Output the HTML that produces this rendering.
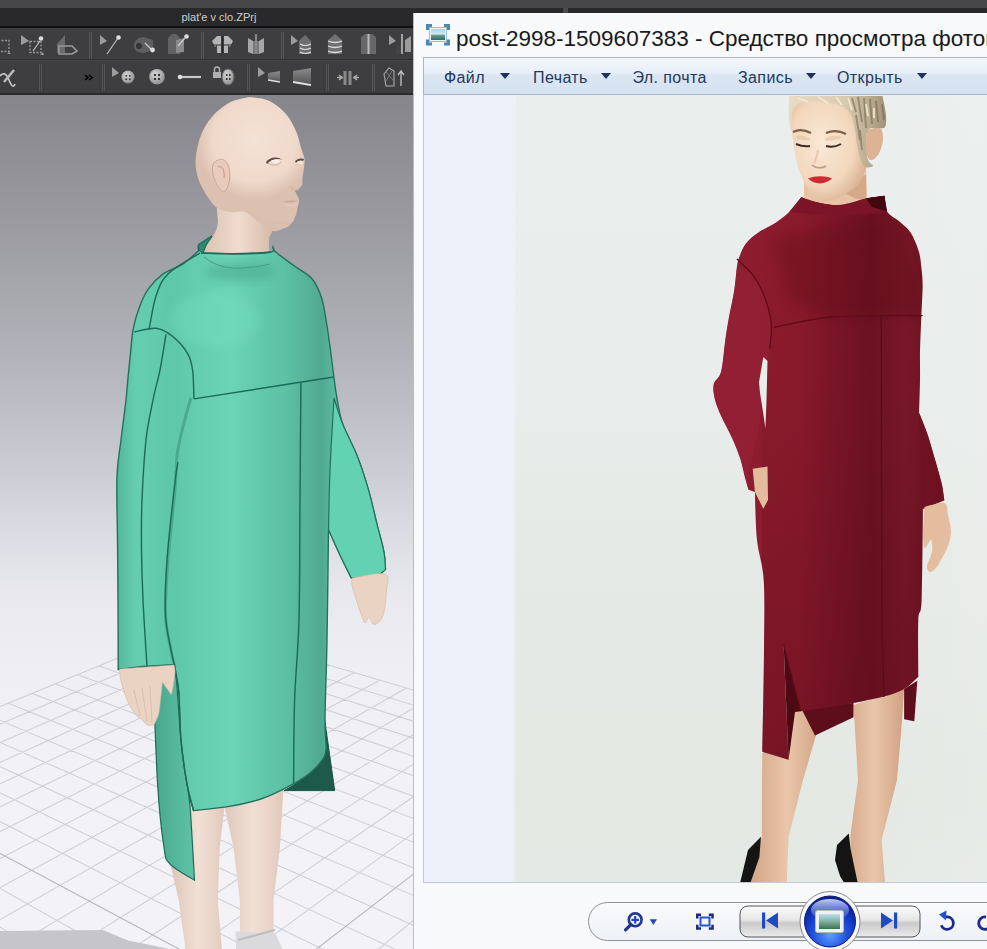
<!DOCTYPE html>
<html><head><meta charset="utf-8">
<style>
*{margin:0;padding:0;box-sizing:border-box}
html,body{width:987px;height:949px;overflow:hidden;background:#474749;font-family:"Liberation Sans",sans-serif}
.abs{position:absolute}
#clo{left:0;top:0;width:413px;height:949px;overflow:hidden}
#topgray{left:0;top:0;width:987px;height:8px;background:#474749}
#titlebar{left:0;top:8px;width:987px;height:18px;background:#29292b}
#blackline{left:0;top:26px;width:413px;height:2px;background:#111}
#row1{left:0;top:28px;width:413px;height:32px;background:#3e3e40;border-bottom:1px solid #2e2e30}
#row2{left:0;top:61px;width:413px;height:32px;background:#3e3e40}
#row2b{left:0;top:93px;width:413px;height:2px;background:#2a2a2c}
#cloTitle{left:181.5px;top:11px;font-size:11px;line-height:13px;color:#cfcfcf;white-space:nowrap}
#viewport{left:0;top:95px;width:413px;height:854px;background:linear-gradient(#85858b 0px,#99999f 120px,#b2b2ba 260px,#c8c8d1 360px,#dcdce4 440px,#e8e8ee 500px,#eeeef3 570px,#f2f2f6 680px,#f3f3f7 854px)}
#win{left:413px;top:13px;width:574px;height:936px;background:#f8f9fa;border-left:1px solid #b9bcc2}
#wtitle{left:456px;top:25.5px;font-size:22.5px;line-height:26px;color:#1a1a1a;white-space:nowrap}
#menubar{left:423px;top:57px;width:564px;height:38px;border:1px solid #a9b7c9;border-right:none;background:linear-gradient(#f3f7fc 0px,#e9f0f9 14px,#dbe6f3 17px,#d6e2f1 35px)}
.mi{position:absolute;top:69px;font-size:16px;line-height:18px;letter-spacing:0.4px;color:#24395e;white-space:nowrap}
.tri{position:absolute;top:73px;width:0;height:0;border-left:5.5px solid transparent;border-right:5.5px solid transparent;border-top:6px solid #1e3160}
#content{left:423px;top:95px;width:564px;height:788px;background:#ecf1f9;border-left:1px solid #c3c9d2;border-bottom:1px solid #c3c9d2}
#photo{left:513px;top:95px;width:474px;height:787px;background:linear-gradient(90deg,rgba(255,255,255,0.35) 0px,rgba(255,255,255,0) 4px,rgba(255,255,255,0) 60%,rgba(255,255,255,0.12) 100%),linear-gradient(#eaeeec 0px,#e8ecea 300px,#e5e9e5 560px,#e3e8e3 700px,#e5e9e5 787px)}
</style></head><body>
<div id="topgray" class="abs"></div>
<div id="titlebar" class="abs"></div>
<div id="clo" class="abs">
  <div id="blackline" class="abs"></div>
  <div id="row1" class="abs"></div>
  <div id="row2" class="abs"></div>
  <div id="row2b" class="abs"></div>
  <svg class="abs" style="left:0;top:28px" width="413" height="67" viewBox="0 28 413 67">
<defs>
<linearGradient id="ig" x1="0" y1="0" x2="0" y2="1"><stop offset="0" stop-color="#8a8a8a"/><stop offset="1" stop-color="#5a5a5a"/></linearGradient>
<radialGradient id="bt" cx="0.4" cy="0.35" r="0.7"><stop offset="0" stop-color="#d8d8d8"/><stop offset="1" stop-color="#8a8a8a"/></radialGradient>
</defs>
<g stroke="#555557" stroke-width="1"><path d="M89.5 32V59M91.5 32V59M201.5 32V59M203.5 32V59M281.5 32V59M283.5 32V59M39.5 64V91M41.5 64V91M102.5 64V91M104.5 64V91M247.5 64V91M249.5 64V91M326.5 64V91M328.5 64V91M372.5 64V91M374.5 64V91"/></g>
<g fill="none" stroke="#9a9a9a" stroke-width="1.3" stroke-dasharray="2 1.5">
<rect x="-2" y="40.5" width="11" height="11"/><rect x="30" y="41.5" width="11" height="11"/></g>
<path d="M9 52l2 2h-4z M43 52l1 3h-4z" fill="#999"/>
<path d="M21 35l8 6l-8 4z" fill="#9c9c9c"/><path d="M33 51l7-10" stroke="#bbb" stroke-width="1.3"/><circle cx="41" cy="38.5" r="2.3" fill="#ddd"/>
<path d="M57 44l8-9v18h-8z" fill="#6a6a6a"/><path d="M59 46h13l5 5l-5 3h-13z" fill="none" stroke="#9a9a9a" stroke-width="1.5"/>
<path d="M100 35l7 6l-7 4z" fill="#9c9c9c"/><path d="M107 54l11-16" stroke="#bbb" stroke-width="1.2"/><circle cx="118.5" cy="37.5" r="2.3" fill="#ddd"/>
<path d="M134 46c0-6 5-9 10-9l9 3v10l-9 3c-6 0-10-2-10-7z" fill="#5e5e60"/><circle cx="139" cy="46" r="3" fill="#333"/><path d="M145 43l6 6" stroke="#ccc" stroke-width="1.3"/><circle cx="152.5" cy="50" r="2.4" fill="#ddd"/>
<path d="M168 38l4-4h4l4 4v16h-12z" fill="#626264"/><path d="M176 40l8-2v14l-8 1z" fill="#8a8a8a"/><circle cx="186.5" cy="36.5" r="2.3" fill="#ddd"/><path d="M178 46l7-8" stroke="#ccc" stroke-width="1.2"/>
<path d="M212 41l5-5h4v17h-4v-8l-2 2zM233 41l-5-5h-4v17h4v-8l2 2z" fill="#b4b4b4"/><path d="M222 36h1v17h-1z" fill="#222"/><path d="M212 45h21" stroke="#333" stroke-width="1"/>
<path d="M248 38l5 3v13l-5-2zM264 38l-5 3v13l5-2z" fill="#a8a8a8"/><path d="M253 41h6v13h-6z" fill="#777"/><path d="M256 34v20" stroke="#888" stroke-width="2"/>
<path d="M291 35l7 6l-7 4z" fill="#9c9c9c"/><path d="M299 41l6-6l6 6v13h-12z" fill="#6e6e70"/><path d="M300 44q5 3 11 0M300 48q5 3 11 0M300 52q5 3 11 0" stroke="#ddd" stroke-width="1.2" fill="none"/>
<path d="M328 40l7-6l7 6v14h-14z" fill="#707072"/><path d="M328 41q7 3 14 0M328 46q7 3 14 0M328 51q7 3 14 0" stroke="#ddd" stroke-width="1.3" fill="none"/>
<path d="M361 37l4-3h7l4 3v17h-15z" fill="#68686a"/><path d="M368.5 34v20" stroke="#bbb" stroke-width="2"/>
<path d="M389 35l7 6l-7 4z" fill="#9c9c9c"/><path d="M402 34v20" stroke="#bbb" stroke-width="1.6"/><path d="M405 40l6-4v16h-6z" fill="#9a9a9a"/><path d="M396 45l5-1v10h-5z" fill="#444"/>
<path d="M0 76q5 -6 9 4t6 4" stroke="#cfcfcf" stroke-width="1.5" fill="none"/><path d="M4 82l10-12" stroke="#bbb" stroke-width="2.5"/>
<path d="M85 75l3 2.5l-3 2.5M89 75l3 2.5l-3 2.5" stroke="#000" stroke-width="1.6" fill="none"/>
<path d="M112 67l7 6l-7 4z" fill="#9c9c9c"/><circle cx="128" cy="77" r="6.5" fill="url(#bt)"/><path d="M125.5 75h1.6v1.6h-1.6zM129 75h1.6v1.6h-1.6zM125.5 78.4h1.6v1.6h-1.6zM129 78.4h1.6v1.6h-1.6z" fill="#333"/>
<circle cx="157" cy="76.8" r="7.8" fill="url(#bt)"/><path d="M154 74h2v2h-2zM158 74h2v2h-2zM154 78h2v2h-2zM158 78h2v2h-2z" fill="#333"/>
<path d="M180 77h21" stroke="#c8c8c8" stroke-width="2.2"/><circle cx="180" cy="77" r="2.3" fill="#ddd"/>
<path d="M213 72h8v6h-8z" fill="#b0b0b0"/><path d="M214.5 72v-2.5a2.5 2.5 0 0 1 5 0v2.5" stroke="#b0b0b0" stroke-width="1.4" fill="none"/>
<ellipse cx="228" cy="77" rx="6" ry="8" fill="url(#bt)" stroke="#666"/><path d="M226 74h1.5v2h-1.5zM229 74h1.5v2h-1.5zM226 78h1.5v2h-1.5zM229 78h1.5v2h-1.5z" fill="#333"/>
<path d="M258 67l7 6l-7 4z" fill="#9c9c9c"/><path d="M268 73l12-2v10l-12-1z" fill="url(#ig)"/><path d="M268 80l12 2" stroke="#ddd" stroke-width="1.6"/>
<path d="M293 71l18-3v15l-18-1z" fill="url(#ig)"/><path d="M293 82l18 3" stroke="#e0e0e0" stroke-width="1.8"/>
<path d="M345 71v14M350 71v14" stroke="#8a8a8a" stroke-width="3"/><path d="M337 77.5h6M339 75l3 2.5l-3 2.5M359 77.5h-6M357 75l-3 2.5l3 2.5" stroke="#aaa" stroke-width="1.6" fill="none"/>
<path d="M384 74l5-6l5 3v15h-8z" fill="none" stroke="#aaa" stroke-width="1.1"/><path d="M386 72l7 8M392 71l-6 10" stroke="#888" stroke-width="0.8"/><path d="M401 86v-14M398 75l3-4l3 4" stroke="#bbb" stroke-width="1.4" fill="none"/>
</svg>
  <div id="cloTitle" class="abs">plat'e v clo.ZPrj</div>
  <div id="viewport" class="abs"></div>
<svg class="abs" style="left:0;top:0" width="413" height="949" viewBox="0 0 413 949">
<defs>
<linearGradient id="leg" x1="0" x2="1"><stop offset="0" stop-color="#dcc5b8"/><stop offset="0.5" stop-color="#f2e0d5"/><stop offset="1" stop-color="#e0c8ba"/></linearGradient>
<linearGradient id="body" x1="118" x2="386" y1="0" y2="0" gradientUnits="userSpaceOnUse">
 <stop offset="0" stop-color="#55b99c"/><stop offset="0.07" stop-color="#65ceb1"/><stop offset="0.2" stop-color="#5fc7a9"/><stop offset="0.42" stop-color="#6bd4b7"/><stop offset="0.62" stop-color="#5dc1a4"/><stop offset="0.76" stop-color="#50a991"/><stop offset="0.84" stop-color="#60c7aa"/><stop offset="1" stop-color="#5ec4a7"/></linearGradient>
<linearGradient id="yoke" x1="0" y1="250" x2="0" y2="400" gradientUnits="userSpaceOnUse"><stop offset="0" stop-color="#6ad4b7" stop-opacity="0.6"/><stop offset="1" stop-color="#6ad4b7" stop-opacity="0"/></linearGradient>
<linearGradient id="back" x1="150" x2="195" gradientUnits="userSpaceOnUse"><stop offset="0" stop-color="#46a48a"/><stop offset="1" stop-color="#60c4a7"/></linearGradient>
<radialGradient id="headg" cx="255" cy="140" r="60" gradientUnits="userSpaceOnUse"><stop offset="0" stop-color="#f4e2d6"/><stop offset="0.7" stop-color="#efd9cb"/><stop offset="1" stop-color="#dcc0b0"/></radialGradient>
<linearGradient id="neckg" x1="205" x2="272" gradientUnits="userSpaceOnUse"><stop offset="0" stop-color="#dcc2b3"/><stop offset="0.5" stop-color="#f0dccf"/><stop offset="1" stop-color="#d7bbaa"/></linearGradient>
<filter id="cblur" x="-30%" y="-30%" width="160%" height="160%"><feGaussianBlur stdDeviation="5"/></filter>
<clipPath id="silclip"><path d="M212.0 236.0C209.8 237.4 201.2 242.1 199.0 244.5C196.8 246.9 198.8 249.5 198.8 250.5C196.2 252.7 188.9 260.0 183.0 263.9C177.1 267.8 169.2 269.6 163.5 273.6C157.8 277.7 153.0 282.5 148.9 288.2C144.8 293.9 141.8 300.8 139.2 307.7C136.6 314.6 134.5 322.3 133.1 329.6C131.7 336.9 131.5 343.7 130.7 351.4C129.9 359.1 129.0 367.7 128.2 375.8C127.4 383.9 127.2 389.3 126.0 400.0C124.8 410.7 122.5 427.3 121.0 440.0C119.5 452.7 117.6 459.3 117.0 476.0C116.4 492.7 117.3 519.3 117.5 540.0C117.7 560.7 117.9 578.4 118.0 600.0C118.1 621.6 118.2 657.9 118.2 669.5C123.0 669.0 137.6 667.1 147.0 666.3C156.4 665.5 169.9 665.0 174.5 664.8C174.8 667.3 175.8 675.4 176.5 680.0C177.2 684.6 178.1 682.7 178.8 692.7C179.6 702.7 179.6 724.8 181.0 740.0C182.4 755.2 184.9 772.2 187.0 784.0C189.1 795.8 192.4 806.2 193.5 810.6C199.5 809.9 218.1 808.3 229.3 806.4C240.5 804.5 250.4 802.7 260.9 799.0C271.4 795.3 284.1 788.8 292.5 784.3C300.9 779.8 306.2 776.2 311.5 771.7C316.8 767.2 321.7 761.2 324.1 757.0C326.6 752.8 325.9 748.2 326.2 746.4C326.0 742.0 324.9 737.7 325.0 720.0C325.1 702.3 326.4 671.8 327.0 640.0C327.6 608.2 328.2 547.9 328.5 529.5C330.4 533.8 336.2 546.9 340.0 555.0C343.8 563.1 349.4 574.2 351.3 578.0C355.6 577.5 371.3 576.4 377.0 575.0C382.7 573.6 384.1 570.3 385.5 569.4C385.2 566.5 385.4 559.9 384.0 552.3C382.6 544.7 379.5 534.2 376.9 523.8C374.3 513.4 371.7 501.1 368.4 489.7C365.1 478.3 361.3 466.4 357.0 455.5C352.7 444.6 346.0 433.5 342.7 424.0C339.4 414.5 338.5 406.5 337.0 398.5C335.5 390.5 334.9 384.4 333.7 375.8C332.5 367.2 331.2 355.5 330.0 346.6C328.8 337.7 327.8 330.4 326.4 322.3C325.0 314.2 324.0 305.3 321.6 298.0C319.2 290.7 316.3 283.8 311.8 278.5C307.3 273.2 300.9 270.8 294.8 266.3C288.7 261.8 279.0 254.9 275.3 251.7C271.6 248.5 273.3 247.7 272.9 246.9C272.6 247.8 276.5 250.8 271.0 252.0C265.5 253.2 251.3 253.8 240.0 254.0C228.7 254.2 209.2 253.2 203.0 253.0C203.5 251.7 204.5 247.8 206.0 245.0C207.5 242.2 211.0 237.5 212.0 236.0Z"/></clipPath>
</defs>
<path d="M1276.9 945.7L1272.0 1000.2 M1214.6 927.2L1201.9 1000.0 M1155.2 909.6L1132.2 1000.1 M-694.2 992.8L-689.5 1000.1 M1098.8 892.9L1062.6 1000.2 M-639.3 970.2L-617.4 1000.0 M1045.0 877.0L993.5 1000.1 M-587.3 948.8L-544.8 1000.2 M993.6 861.8L924.5 1000.1 M-538.0 928.4L-472.1 1000.1 M944.6 847.3L855.8 1000.2 M-491.1 909.1L-398.8 1000.2 M897.7 833.4L787.5 1000.1 M-446.5 890.7L-325.4 1000.1 M852.8 820.1L719.4 1000.2 M-404.0 873.2L-251.7 1000.1 M809.8 807.4L651.7 1000.0 M-363.4 856.5L-177.4 1000.2 M768.6 795.2L584.0 1000.1 M-324.7 840.5L-103.1 1000.1 M729.0 783.5L516.7 1000.2 M-287.7 825.3L-28.4 1000.0 M691.0 772.2L449.8 1000.1 M-252.4 810.7L47.0 1000.2 M654.5 761.4L383.0 1000.2 M-218.5 796.7L122.3 1000.1 M619.3 751.0L316.7 1000.0 M-186.0 783.3L198.0 1000.0 M552.9 731.4L184.3 1000.2 M-124.9 758.2L350.9 1000.1 M521.5 722.1L118.8 1000.0 M-96.1 746.3L428.0 1000.2 M491.2 713.1L53.3 1000.1 M-68.5 734.9L505.1 1000.1 M461.9 704.4L-12.0 1000.2 M-41.8 723.9L582.5 1000.0 M433.6 696.1L-76.7 1000.1 M-16.2 713.4L660.8 1000.2 M406.3 688.0L-141.5 1000.2 M8.5 703.2L739.0 1000.1 M379.9 680.1L-205.6 1000.0 M32.4 693.4L817.5 1000.0 M354.4 672.6L-269.9 1000.1 M55.4 683.9L896.9 1000.1 M329.6 665.3L-334.0 1000.2 M77.6 674.7L976.1 1000.1 M305.6 658.2L-397.3 1000.1 M99.0 665.9L1056.3 1000.2 M282.4 651.3L-460.9 1000.2 M119.8 657.3L1136.3 1000.1 M259.9 644.6L-523.7 1000.0 M139.8 649.1L1216.6 1000.0 M238.1 638.2L-586.8 1000.1 M159.3 641.1L1272.7 992.2 M216.9 631.9L-649.7 1000.2 M178.1 633.3L1274.9 968.3 M196.3 625.8L-711.8 1000.0 M196.3 625.8L1276.9 945.7" stroke="#cfcfd8" stroke-width="1.1" fill="none"/>
<path d="M585.5 741.0L250.4 1000.1 M-154.8 770.5L274.5 1000.1" stroke="#b4b4bd" stroke-width="1.1" fill="none"/>
<path d="M0 931L103 930L128 940.5L170 949L0 949Z" fill="#c6c6ca"/>
<path d="M186 795L226 795L224 811.7L219.8 847.5L217.7 900L222 949L185.4 949L178.7 900L170.3 864Z" fill="url(#leg)"/>
<path d="M222 795L284 780L279.9 847.5L273.6 900L273.5 933L240 933L239.8 900L233.5 847.5Z" fill="url(#leg)"/>
<path d="M235.6 931.4L275 933L282.7 949L236 949Z" fill="#dadadc"/>
<path d="M238 940L275 930" stroke="#bdbdc0" stroke-width="2"/>
<path d="M216 198L218 222C217 230 214 238 204 246L204 262L270 262L269 247L269 238L275 226L250 202Z" fill="url(#neckg)"/>
<path d="M249.5 97.0C246.2 97.9 236.1 99.2 229.8 102.5C223.5 105.8 216.7 111.5 211.9 116.9C207.1 122.3 203.8 128.0 201.1 134.8C198.4 141.7 196.3 151.1 195.7 158.0C195.1 164.9 196.0 170.3 197.5 176.0C199.0 181.7 201.7 186.9 204.7 192.0C207.7 197.1 211.2 203.1 215.4 206.4C219.6 209.7 224.9 211.1 230.0 212.0C235.1 212.9 241.0 210.3 246.0 212.0C251.0 213.7 255.5 218.8 260.0 222.0C264.5 225.2 269.3 229.8 273.0 231.0C276.7 232.2 279.2 229.9 282.0 229.0C284.8 228.1 287.6 227.5 289.8 225.3C292.1 223.1 294.2 218.9 295.5 216.0C296.8 213.1 296.9 210.7 297.5 208.0C298.1 205.3 299.2 202.5 299.0 200.0C298.8 197.5 296.7 194.5 296.0 193.0C295.3 191.5 294.7 191.7 295.0 191.0C295.3 190.3 296.8 190.0 298.0 189.0C299.2 188.0 301.2 186.8 302.0 185.0C302.8 183.2 302.2 180.8 302.5 178.0C302.8 175.2 303.7 171.2 304.0 168.0C304.3 164.8 304.9 162.2 304.5 159.0C304.1 155.8 302.8 153.6 301.4 149.0C300.0 144.4 298.7 137.1 296.0 131.2C293.3 125.2 289.8 118.4 285.3 113.3C280.8 108.2 275.0 103.4 269.0 100.7C263.0 98.0 252.8 97.6 249.5 97.0Z" fill="url(#headg)"/>
<path d="M246 212C256 220 265 228 273 231C283 229 291 225 295 219C288 222 278 224 268 220C258 216 250 212 246 212Z" fill="#d9bdae" opacity="0.8"/>
<path d="M214 163C219 157 227 158 229 168C231 178 229 188 224 192C219 190 215 182 213 175C212 170 212 166 214 163Z" fill="#e8cbbb" stroke="#c8a898" stroke-width="1"/>
<path d="M218 167C222 165 225 170 224 178" fill="none" stroke="#c09a88" stroke-width="1"/>
<path d="M266 162C270 157 277 156 283 160C279 158 271 159 267 164Z" fill="#5e4a40"/><path d="M268 163C272 166 278 166 281 162" fill="none" stroke="#c8b0a4" stroke-width="1"/><path d="M271 160.5C274 159 278 159 280 161C278 163.5 273 164 271 160.5Z" fill="#f6eee8"/>
<path d="M295 161C298 158 302 158 304 159L303 161C300 160 297 161 296 163Z" fill="#5e4a40"/><path d="M297 162C299 161 301 161 303 162L302.5 164C300 164.5 298 164 297 162Z" fill="#f2e8e0"/>
<path d="M283 202C288 200 294 200 298 201C294 203 288 203 283 202Z" fill="#d4aa9e"/><path d="M285 204C290 206 295 206 297.5 204" fill="none" stroke="#e6cabe" stroke-width="1.5"/>
<path d="M290 186C292 190 296 191 299 189" fill="none" stroke="#d0b2a2" stroke-width="1.2"/>
<path d="M153.0 672.0C153.8 690.7 155.8 755.0 157.6 784.3C159.4 813.5 161.9 834.1 164.0 847.5C166.1 860.9 165.2 858.9 170.3 864.4C175.4 869.9 190.5 877.6 194.5 880.2C193.8 868.4 191.5 825.6 190.3 809.6C189.1 793.6 188.7 795.9 187.1 784.3C185.5 772.7 182.8 758.7 181.0 740.0C179.2 721.3 176.8 683.3 176.0 672.0Z" fill="url(#back)" stroke="#1f6a5a" stroke-width="1.2"/>
<path d="M323 708L334.7 790.6L284.1 790.6C300 782 318 770 326 746Z" fill="#1d5a4b" stroke="#1a5548" stroke-width="1"/>
<path d="M212.0 236.0C209.8 237.4 201.2 242.1 199.0 244.5C196.8 246.9 198.8 249.5 198.8 250.5C196.2 252.7 188.9 260.0 183.0 263.9C177.1 267.8 169.2 269.6 163.5 273.6C157.8 277.7 153.0 282.5 148.9 288.2C144.8 293.9 141.8 300.8 139.2 307.7C136.6 314.6 134.5 322.3 133.1 329.6C131.7 336.9 131.5 343.7 130.7 351.4C129.9 359.1 129.0 367.7 128.2 375.8C127.4 383.9 127.2 389.3 126.0 400.0C124.8 410.7 122.5 427.3 121.0 440.0C119.5 452.7 117.6 459.3 117.0 476.0C116.4 492.7 117.3 519.3 117.5 540.0C117.7 560.7 117.9 578.4 118.0 600.0C118.1 621.6 118.2 657.9 118.2 669.5C123.0 669.0 137.6 667.1 147.0 666.3C156.4 665.5 169.9 665.0 174.5 664.8C174.8 667.3 175.8 675.4 176.5 680.0C177.2 684.6 178.1 682.7 178.8 692.7C179.6 702.7 179.6 724.8 181.0 740.0C182.4 755.2 184.9 772.2 187.0 784.0C189.1 795.8 192.4 806.2 193.5 810.6C199.5 809.9 218.1 808.3 229.3 806.4C240.5 804.5 250.4 802.7 260.9 799.0C271.4 795.3 284.1 788.8 292.5 784.3C300.9 779.8 306.2 776.2 311.5 771.7C316.8 767.2 321.7 761.2 324.1 757.0C326.6 752.8 325.9 748.2 326.2 746.4C326.0 742.0 324.9 737.7 325.0 720.0C325.1 702.3 326.4 671.8 327.0 640.0C327.6 608.2 328.2 547.9 328.5 529.5C330.4 533.8 336.2 546.9 340.0 555.0C343.8 563.1 349.4 574.2 351.3 578.0C355.6 577.5 371.3 576.4 377.0 575.0C382.7 573.6 384.1 570.3 385.5 569.4C385.2 566.5 385.4 559.9 384.0 552.3C382.6 544.7 379.5 534.2 376.9 523.8C374.3 513.4 371.7 501.1 368.4 489.7C365.1 478.3 361.3 466.4 357.0 455.5C352.7 444.6 346.0 433.5 342.7 424.0C339.4 414.5 338.5 406.5 337.0 398.5C335.5 390.5 334.9 384.4 333.7 375.8C332.5 367.2 331.2 355.5 330.0 346.6C328.8 337.7 327.8 330.4 326.4 322.3C325.0 314.2 324.0 305.3 321.6 298.0C319.2 290.7 316.3 283.8 311.8 278.5C307.3 273.2 300.9 270.8 294.8 266.3C288.7 261.8 279.0 254.9 275.3 251.7C271.6 248.5 273.3 247.7 272.9 246.9C272.6 247.8 276.5 250.8 271.0 252.0C265.5 253.2 251.3 253.8 240.0 254.0C228.7 254.2 209.2 253.2 203.0 253.0C203.5 251.7 204.5 247.8 206.0 245.0C207.5 242.2 211.0 237.5 212.0 236.0Z" fill="url(#body)" stroke="#24705f" stroke-width="1.4"/>
<path d="M191.0 398.0C190.2 400.8 187.7 408.8 186.0 415.0C184.3 421.2 182.5 428.2 181.0 435.0C179.5 441.8 178.0 446.8 177.0 456.0C176.0 465.2 176.5 472.7 175.0 490.0C173.5 507.3 169.6 539.2 168.0 560.0C166.4 580.8 165.0 600.0 165.5 615.0C166.0 630.0 169.4 641.2 171.0 650.0C172.6 658.8 174.3 665.0 175.0 668.0" fill="none" stroke="#3f9c84" stroke-width="3" opacity="0.7"/>
<g fill="none" stroke="#1b6a5a" stroke-width="1.4">
<path d="M200.0 253.0C194.7 256.4 175.7 266.5 168.4 273.6C161.1 280.7 159.4 286.2 156.2 295.5C153.0 304.8 150.2 323.9 149.0 329.6"/>
<path d="M134.3 332.0C138.0 331.4 149.7 327.5 156.2 328.3C162.7 329.1 167.9 332.6 173.2 336.9C178.5 341.2 184.6 348.2 187.8 353.9C191.1 359.6 191.7 363.4 192.7 370.9C193.7 378.4 193.7 394.2 193.9 398.9"/>
<path d="M178.0 462.0C177.4 466.0 176.3 469.7 174.5 486.0C172.7 502.3 168.5 538.5 167.0 560.0C165.5 581.5 164.8 600.0 165.5 615.0C166.2 630.0 169.4 641.2 171.0 650.0C172.6 658.8 173.7 660.9 175.0 668.0C176.3 675.1 177.8 680.7 178.8 692.7C179.8 704.7 179.6 724.8 181.0 740.0C182.4 755.2 184.9 772.2 187.0 784.0C189.1 795.8 192.4 806.2 193.5 810.6"/>
<path d="M166.0 334.4C165.0 340.3 162.2 359.1 160.0 370.0C157.8 380.9 155.3 388.3 153.0 400.0C150.7 411.7 147.8 423.3 146.0 440.0C144.2 456.7 142.8 481.7 142.0 500.0C141.2 518.3 141.3 533.3 141.5 550.0C141.7 566.7 142.1 580.6 143.0 600.0C143.9 619.4 146.3 655.2 147.0 666.3"/>
<path d="M193.9 398.9L333.7 377"/>
<path d="M300.9 383.0C300.8 402.5 300.3 460.5 300.0 500.0C299.7 539.5 299.9 586.7 299.0 620.0C298.1 653.3 295.5 672.6 294.6 700.0C293.7 727.4 293.8 770.2 293.6 784.3"/>
<path d="M118.2 669.5L174.5 664.8"/>
<path d="M201 253C225 254 250 254 270.5 252"/>
</g>
<g clip-path="url(#silclip)"><ellipse cx="240" cy="272" rx="34" ry="9" fill="#3f9c82" opacity="0.45" filter="url(#cblur)"/><ellipse cx="215" cy="320" rx="45" ry="28" fill="#7ae0c4" opacity="0.35" filter="url(#cblur)"/></g>
<path d="M212 236L199 244.5L198.8 250.5L203 253L206 245Z" fill="#2c8a72" stroke="#1f6e5e" stroke-width="1"/>
<path d="M204 257C215 266 228 269 242 268C255 267 262 266 270 264" fill="none" stroke="#4a9a88" stroke-width="1"/>
<path d="M119.5 669.0L174.0 665.0C174.2 666.2 175.1 668.8 175.0 672.0C174.9 675.2 174.1 680.2 173.5 684.0C172.9 687.8 171.8 693.0 171.4 694.8C170.8 694.0 169.5 692.1 168.0 690.0C166.5 687.9 163.3 683.3 162.4 682.0C162.1 685.0 161.1 694.7 160.5 700.0C159.9 705.3 159.7 709.8 158.7 713.8C157.7 717.8 155.2 722.5 154.5 724.3C153.8 724.5 151.4 725.5 150.0 725.5C148.6 725.5 146.7 724.5 146.0 724.3C145.2 723.4 142.7 720.5 141.0 719.0C139.3 717.5 137.8 717.2 136.0 715.0C134.2 712.8 131.8 709.5 130.0 706.0C128.2 702.5 126.5 698.2 125.0 694.0C123.5 689.8 121.9 685.2 121.0 681.0C120.1 676.8 119.8 671.0 119.5 669.0Z" fill="#ebd3c3" stroke="#d2b6a6" stroke-width="0.6"/>
<path d="M134 690L140 716M142 688L147 722M150 686L152 722" stroke="#d9bfb0" stroke-width="1" fill="none"/>
<path d="M334.0 398.0C335.4 402.3 338.9 414.4 342.7 424.0C346.5 433.6 352.7 444.6 357.0 455.5C361.3 466.4 365.1 478.3 368.4 489.7C371.7 501.1 374.3 513.4 376.9 523.8C379.5 534.2 382.6 544.7 384.0 552.3C385.4 559.9 385.2 566.5 385.5 569.4C384.1 570.3 382.7 573.6 377.0 575.0C371.3 576.4 355.6 577.5 351.3 578.0C349.4 574.2 343.8 563.1 340.0 555.0C336.2 546.9 330.4 533.8 328.5 529.5C328.8 519.6 329.1 491.9 330.0 470.0C330.9 448.1 333.3 410.0 334.0 398.0Z" fill="#62d2b3" stroke="#24705f" stroke-width="1.2"/>
<path d="M352.0 578.0C357.5 577.3 379.2 572.0 385.0 574.0C390.8 576.0 386.7 583.7 386.5 590.0C386.3 596.3 385.2 606.7 384.0 612.0C382.8 617.3 380.8 620.0 379.0 622.0C377.2 624.0 374.7 624.8 373.0 624.0C371.3 623.2 370.3 617.2 369.0 617.0C367.7 616.8 366.3 623.5 365.0 623.0C363.7 622.5 362.3 617.5 361.0 614.0C359.7 610.5 358.5 606.8 357.0 602.0C355.5 597.2 352.8 589.0 352.0 585.0C351.2 581.0 352.0 579.2 352.0 578.0Z" fill="#ebd3c3" stroke="#d2b6a6" stroke-width="0.6"/>
</svg>
</div>
<div class="abs" style="left:563px;top:8px;width:5px;height:5px;background:#4a4a4c"></div>
<div id="win" class="abs"></div>
<svg class="abs" style="left:424px;top:22px" width="30" height="26" viewBox="424 22 30 26">
<defs><linearGradient id="icp" x1="0" y1="0" x2="0" y2="1"><stop offset="0" stop-color="#a9d2ee"/><stop offset="0.45" stop-color="#d0e8f0"/><stop offset="0.6" stop-color="#5e9a80"/><stop offset="1" stop-color="#2f6a70"/></linearGradient></defs>
<path d="M426 24h6v3h-3v3h-3zM450 24h-6v3h3v3h3zM426 45.5h6v-3h-3v-3h-3zM450 45.5h-6v-3h3v-3h3z" fill="#4f86ad"/>
<rect x="429.5" y="27.5" width="17" height="14" fill="#eaf4fb" stroke="#8fc0e0" stroke-width="1"/>
<rect x="431" y="29" width="14" height="11" fill="url(#icp)"/>
</svg>
<div id="wtitle" class="abs">post-2998-1509607383 - Средство просмотра фотографий</div>
<div id="menubar" class="abs"></div>
<div class="mi" style="left:444px">Файл</div><div class="tri" style="left:500px"></div>
<div class="mi" style="left:533px">Печать</div><div class="tri" style="left:601px"></div>
<div class="mi" style="left:632.5px">Эл. почта</div>
<div class="mi" style="left:738px">Запись</div><div class="tri" style="left:806px"></div>
<div class="mi" style="left:837px">Открыть</div><div class="tri" style="left:917px"></div>
<div id="content" class="abs"></div>
<div id="photo" class="abs"></div>
<svg class="abs" style="left:516px;top:95px" width="471" height="787" viewBox="516 95 471 787">
<defs>
<linearGradient id="rd" x1="715" y1="0" x2="945" y2="0" gradientUnits="userSpaceOnUse"><stop offset="0" stop-color="#8e1d2f"/><stop offset="0.37" stop-color="#8a1a2c"/><stop offset="0.54" stop-color="#7a1527"/><stop offset="0.68" stop-color="#6d1223"/><stop offset="0.74" stop-color="#721525"/><stop offset="0.83" stop-color="#7a1828"/><stop offset="0.9" stop-color="#741526"/><stop offset="1" stop-color="#6c1020"/></linearGradient>
<linearGradient id="diag" x1="780" y1="230" x2="900" y2="330" gradientUnits="userSpaceOnUse"><stop offset="0" stop-color="#6a0c1c" stop-opacity="0"/><stop offset="0.5" stop-color="#6a0c1c" stop-opacity="0.45"/><stop offset="1" stop-color="#6a0c1c" stop-opacity="0"/></linearGradient>
<linearGradient id="vdark" x1="0" y1="200" x2="0" y2="760" gradientUnits="userSpaceOnUse"><stop offset="0" stop-color="#4a0612" stop-opacity="0"/><stop offset="0.35" stop-color="#4a0612" stop-opacity="0.05"/><stop offset="1" stop-color="#4a0612" stop-opacity="0.3"/></linearGradient>
<linearGradient id="legp" x1="0" x2="1"><stop offset="0" stop-color="#d2a587"/><stop offset="0.5" stop-color="#eac6aa"/><stop offset="1" stop-color="#cfa182"/></linearGradient>
<radialGradient id="face" cx="0.42" cy="0.45" r="0.62"><stop offset="0" stop-color="#fae8d6"/><stop offset="0.65" stop-color="#f2d7bd"/><stop offset="1" stop-color="#d9b192"/></radialGradient>
<linearGradient id="hairg" x1="790" y1="0" x2="887" y2="0" gradientUnits="userSpaceOnUse"><stop offset="0" stop-color="#e6dcc4"/><stop offset="0.55" stop-color="#d8cbb0"/><stop offset="0.8" stop-color="#bcae92"/><stop offset="1" stop-color="#a09078"/></linearGradient>
<filter id="blur6" x="-20%" y="-20%" width="140%" height="140%"><feGaussianBlur stdDeviation="6"/></filter>
<clipPath id="dclip"><path d="M801.4 197.1C799.4 199.5 793.8 207.4 789.6 211.6C785.4 215.8 781.7 218.7 776.4 222.2C771.1 225.7 763.0 229.2 758.0 232.7C753.0 236.2 749.2 239.2 746.1 243.2C743.0 247.1 741.0 252.4 739.5 256.4C738.0 260.3 737.8 261.2 736.9 266.9C736.0 272.6 735.5 282.2 734.2 290.6C732.9 299.0 730.5 308.8 729.0 317.0C727.5 325.2 726.6 330.9 725.3 340.0C724.0 349.1 723.0 364.2 721.1 371.6C719.2 379.0 714.8 379.7 713.7 384.3C712.7 388.9 713.6 393.7 714.8 399.0C716.0 404.3 718.3 409.7 721.1 416.0C723.9 422.3 728.5 430.0 731.6 437.0C734.8 444.0 737.7 451.0 740.0 458.0C742.3 465.0 744.0 473.9 745.4 479.2C746.8 484.5 748.0 488.0 748.5 489.8L754.9 492.0C755.2 500.0 755.5 525.3 757.0 540.0C758.5 554.7 762.5 561.7 763.7 580.0C764.9 598.3 764.2 621.4 764.0 650.0C763.8 678.6 762.6 734.8 762.3 751.7L788.6 759.8C788.2 749.8 786.8 719.2 786.0 700.0C785.2 680.8 784.0 653.6 783.6 644.3C785.0 649.9 789.1 666.9 792.0 678.0C794.9 689.1 799.3 705.7 800.8 711.2C807.5 710.2 827.8 707.5 841.3 705.1C854.8 702.7 871.3 699.7 881.8 697.0C892.3 694.3 898.0 692.3 904.1 688.9C910.2 685.5 915.9 678.7 918.3 676.7C918.3 667.2 917.8 632.8 918.3 620.0C918.8 607.2 920.8 618.5 921.6 600.0C922.4 581.5 922.7 524.2 922.9 509.0L944.3 500.3C943.9 497.6 943.3 490.4 941.8 483.9C940.3 477.3 937.8 469.0 935.5 461.0C933.2 453.0 930.5 443.4 928.0 435.8C925.5 428.2 921.8 419.4 920.3 415.6C918.8 411.8 919.2 413.4 919.0 413.0C919.2 407.5 919.8 390.3 920.0 380.0C920.2 369.7 919.8 361.7 920.0 351.2C920.2 340.7 920.9 328.0 921.3 317.0C921.7 306.0 922.6 293.8 922.6 285.4C922.6 277.0 921.9 272.6 921.3 266.9C920.6 261.2 920.5 256.8 918.7 251.1C916.9 245.4 913.8 237.5 910.7 232.7C907.6 227.9 904.2 225.7 900.2 222.2C896.2 218.7 889.6 216.0 887.0 211.6C884.4 207.2 884.8 198.4 884.4 195.8C881.3 196.2 873.7 196.9 866.0 198.4C858.3 199.9 847.2 204.6 838.0 205.0C828.8 205.4 816.7 202.3 810.6 201.0C804.5 199.7 802.9 197.8 801.4 197.1Z"/></clipPath>
</defs>
<path d="M804 178L866 168L868 212L804 212Z" fill="#e7c4a6"/>
<path d="M838 185C845 195 855 200 866 200L866 175Z" fill="#d4a888"/>
<path d="M790.0 96.0C790.0 99.7 789.7 111.9 790.0 118.0C790.3 124.1 791.3 127.6 792.0 132.8C792.7 138.0 793.3 143.3 794.3 149.0C795.3 154.7 796.4 161.3 798.0 166.7C799.6 172.1 801.8 177.1 804.0 181.5C806.2 185.9 808.8 190.4 811.3 193.3C813.8 196.2 815.8 198.0 818.7 199.2C821.7 200.4 824.8 201.4 829.0 200.7C833.2 200.0 838.9 197.5 843.8 194.8C848.7 192.1 855.1 188.1 858.5 184.4C861.9 180.7 862.9 176.0 864.4 172.6C865.9 169.2 866.9 165.3 867.4 163.8C867.2 158.4 866.9 142.6 866.0 131.3C865.1 120.0 862.7 101.9 862.0 96.0L790.0 96.0Z" fill="url(#face)"/>
<path d="M867.0 130.0C869.2 129.7 877.3 126.3 880.0 128.0C882.7 129.7 883.3 135.5 883.0 140.0C882.7 144.5 880.2 151.7 878.0 155.0C875.8 158.3 872.0 160.8 870.0 160.0C868.0 159.2 866.5 155.0 866.0 150.0C865.5 145.0 866.8 133.3 867.0 130.0Z" fill="#dcb394"/>
<path d="M789.3 96.0L882.5 96.0C883.1 99.2 885.6 109.8 886.0 115.0C886.4 120.2 886.3 124.8 885.0 127.0C883.7 129.2 880.8 127.5 878.0 128.0C875.2 128.5 870.0 127.2 868.0 130.0C866.0 132.8 866.0 140.0 866.0 145.0C866.0 150.0 866.8 156.5 868.0 160.0C869.2 163.5 873.7 165.0 873.0 166.0C872.3 167.0 866.5 168.7 864.0 166.0C861.5 163.3 859.5 156.0 858.0 150.0C856.5 144.0 856.3 136.2 855.0 130.0C853.7 123.8 852.8 117.2 850.0 113.0C847.2 108.8 843.8 106.8 838.0 104.8C832.2 102.8 821.3 101.6 815.0 101.3C808.7 101.0 803.8 101.2 800.0 103.0C796.2 104.8 793.4 107.4 792.0 112.0C790.6 116.6 792.2 129.1 791.7 130.4C791.2 131.7 789.4 125.7 789.0 120.0C788.6 114.3 789.2 100.0 789.3 96.0Z" fill="url(#hairg)"/>
<path d="M852 98L856 112M858 97L862 122M864 98L866 128M870 99L872 124M876 101L878 122M882 104L884 120M860 130L862 150M856 115L860 140" stroke="#6e604c" stroke-width="1.8" fill="none" opacity="0.55"/>
<path d="M798 98L808 102M818 97L828 103M836 97L842 105M848 98L852 110M866 104L868 116M874 108L874 118" stroke="#f2ead6" stroke-width="1.8" fill="none" opacity="0.9"/>
<path d="M808 178.5C815 175.5 826 175.5 832 178.5C826 184.5 815 185.5 808 178.5Z" fill="#cc2c34"/>
<path d="M796 136Q804 134 811 140Q804 141 797 139Z" fill="#e6c4a6" opacity="0.7"/><path d="M825 138Q834 134 843 137Q835 141 826 141Z" fill="#e6c4a6" opacity="0.7"/><path d="M796 144Q803 147 810 146M826 146Q834 148 841 144" stroke="#3e2a1e" stroke-width="2" fill="none"/>
<path d="M793 132Q801 128 811 133M826 133Q836 129 846 134" stroke="#7e5e46" stroke-width="2.2" fill="none"/>
<path d="M812 165C815 168 822 169 826 166" stroke="#c9987a" stroke-width="1.6" fill="none"/><path d="M818 150C817 156 816 160 814 163" stroke="#e8c8ae" stroke-width="2" fill="none"/>
<path d="M762.3 753.7L794.7 697L823 711.2L803 780L788.6 836.8L786.8 882L750.7 882L755.8 857.5L761.9 836.8L762 780Z" fill="url(#legp)"/>
<path d="M853.5 705L904.1 689L902 721.3L897 780L881.6 840.3L885 882L843.7 882L850.6 849L850.6 833.4L858 780Z" fill="url(#legp)"/>
<path d="M761 836.8L748 850L740.3 882L750.7 882L759.3 857.5Z" fill="#141414"/>
<path d="M848.8 833.4L837 845L835 860L840.2 876.5L843.7 882L857.5 882L850.6 849Z" fill="#141414"/>
<path d="M800 706L853.5 703L853.5 717.3L815 735.5Z" fill="#5e0e1a"/>
<path d="M904.1 688.9L917.3 680.8L914.3 721.3L904.1 719.3Z" fill="#5e0e1a"/>
<path d="M801.4 197.1C799.4 199.5 793.8 207.4 789.6 211.6C785.4 215.8 781.7 218.7 776.4 222.2C771.1 225.7 763.0 229.2 758.0 232.7C753.0 236.2 749.2 239.2 746.1 243.2C743.0 247.1 741.0 252.4 739.5 256.4C738.0 260.3 737.8 261.2 736.9 266.9C736.0 272.6 735.5 282.2 734.2 290.6C732.9 299.0 730.5 308.8 729.0 317.0C727.5 325.2 726.6 330.9 725.3 340.0C724.0 349.1 723.0 364.2 721.1 371.6C719.2 379.0 714.8 379.7 713.7 384.3C712.7 388.9 713.6 393.7 714.8 399.0C716.0 404.3 718.3 409.7 721.1 416.0C723.9 422.3 728.5 430.0 731.6 437.0C734.8 444.0 737.7 451.0 740.0 458.0C742.3 465.0 744.0 473.9 745.4 479.2C746.8 484.5 748.0 488.0 748.5 489.8L754.9 492.0C755.2 500.0 755.5 525.3 757.0 540.0C758.5 554.7 762.5 561.7 763.7 580.0C764.9 598.3 764.2 621.4 764.0 650.0C763.8 678.6 762.6 734.8 762.3 751.7L788.6 759.8C788.2 749.8 786.8 719.2 786.0 700.0C785.2 680.8 784.0 653.6 783.6 644.3C785.0 649.9 789.1 666.9 792.0 678.0C794.9 689.1 799.3 705.7 800.8 711.2C807.5 710.2 827.8 707.5 841.3 705.1C854.8 702.7 871.3 699.7 881.8 697.0C892.3 694.3 898.0 692.3 904.1 688.9C910.2 685.5 915.9 678.7 918.3 676.7C918.3 667.2 917.8 632.8 918.3 620.0C918.8 607.2 920.8 618.5 921.6 600.0C922.4 581.5 922.7 524.2 922.9 509.0L944.3 500.3C943.9 497.6 943.3 490.4 941.8 483.9C940.3 477.3 937.8 469.0 935.5 461.0C933.2 453.0 930.5 443.4 928.0 435.8C925.5 428.2 921.8 419.4 920.3 415.6C918.8 411.8 919.2 413.4 919.0 413.0C919.2 407.5 919.8 390.3 920.0 380.0C920.2 369.7 919.8 361.7 920.0 351.2C920.2 340.7 920.9 328.0 921.3 317.0C921.7 306.0 922.6 293.8 922.6 285.4C922.6 277.0 921.9 272.6 921.3 266.9C920.6 261.2 920.5 256.8 918.7 251.1C916.9 245.4 913.8 237.5 910.7 232.7C907.6 227.9 904.2 225.7 900.2 222.2C896.2 218.7 889.6 216.0 887.0 211.6C884.4 207.2 884.8 198.4 884.4 195.8C881.3 196.2 873.7 196.9 866.0 198.4C858.3 199.9 847.2 204.6 838.0 205.0C828.8 205.4 816.7 202.3 810.6 201.0C804.5 199.7 802.9 197.8 801.4 197.1Z" fill="url(#rd)"/>
<path d="M762 195H925V760H762Z" fill="url(#vdark)" clip-path="url(#dclip)"/>
<path d="M783.6 644.3L788.6 759.8L795 712L800.8 711.2Z" fill="#4e0a14"/>
<g clip-path="url(#dclip)"><path d="M775 240L900 215L922 280L922 315L831.7 317L790 300Z" fill="#5e0a18" opacity="0.35" filter="url(#blur6)"/></g>
<path d="M801.4 197.1C808 200 820 204 838 206C850 205 860 200 866 198.4L884.4 195.8L887 211.6C870 214 850 216 830 215C810 214 795 213 789.6 211.6Z" fill="#7a1426"/>
<path d="M866 198.4L884.4 195.8L887 211.6L872 207Z" fill="#40080f"/>
<path d="M736.9 266.9C739.5 268.2 748.3 270.4 752.7 274.8C757.1 279.2 760.1 285.4 763.2 293.3C766.3 301.2 770.0 313.1 771.1 322.3C772.2 331.5 771.1 339.0 769.8 348.6C768.5 358.2 764.8 368.1 763.2 380.0C761.6 391.9 762.2 405.0 760.0 420.0C757.8 435.0 751.9 458.4 750.0 470.0C748.1 481.6 748.8 486.5 748.5 489.8C747.1 484.5 742.8 466.8 740.0 458.0C737.2 449.2 734.8 444.0 731.6 437.0C728.5 430.0 723.9 422.3 721.1 416.0C718.3 409.7 716.0 404.3 714.8 399.0C713.6 393.7 712.7 388.9 713.7 384.3C714.8 379.7 719.2 379.0 721.1 371.6C723.0 364.2 724.0 349.1 725.3 340.0C726.6 330.9 727.5 325.2 729.0 317.0C730.5 308.8 732.9 299.0 734.2 290.6C735.5 282.2 736.5 270.8 736.9 266.9Z" fill="#962237" opacity="0.6" clip-path="url(#dclip)"/>
<path d="M763.3 357L759 382.2L760 392.7L763.3 413.8L765.4 428.6L766.5 400L767.5 361Z" fill="#e9edea"/>
<path d="M919 413L928 435.8L941.8 483.9L944.3 500.3L924 509L921 460Z" fill="#701122" opacity="0.8"/>
<path d="M752.7 468.7L767.5 466.6L768 500L763.3 508.8L754.9 492Z" fill="#e2bc9c"/>
<path d="M924.5 507.0C927.8 506.3 940.4 501.7 944.3 503.0C948.2 504.3 946.9 510.2 948.0 515.0C949.1 519.8 951.0 526.8 951.0 532.0C951.0 537.2 949.5 541.7 948.0 546.0C946.5 550.3 944.0 554.3 942.0 558.0C940.0 561.7 938.0 565.7 936.0 568.0C934.0 570.3 931.5 572.3 930.0 572.0C928.5 571.7 926.7 569.3 927.0 566.0C927.3 562.7 931.3 556.3 932.0 552.0C932.7 547.7 932.2 540.7 931.0 540.0C929.8 539.3 926.3 548.8 925.0 548.0C923.7 547.2 923.1 541.8 923.0 535.0C922.9 528.2 924.2 511.7 924.5 507.0Z" fill="#e3bd9e"/>
<g fill="none" stroke="#5c0c18" stroke-width="1.3">
<path d="M773.8 327.5C783.4 325.8 806.9 319.0 831.7 317.0C856.5 315.0 907.5 315.9 922.6 315.7"/>
<path d="M881.2 314.4L881.8 620L883.9 697"/>
<path d="M736.9 259.0C739.5 261.6 748.3 269.1 752.7 274.8C757.1 280.5 760.1 285.4 763.2 293.3C766.3 301.2 770.0 313.1 771.1 322.3C772.2 331.5 770.0 344.2 769.8 348.6"/>
<path d="M783.6 644.3C785.0 649.9 789.1 666.9 792.0 678.0C794.9 689.1 799.3 705.7 800.8 711.2"/>
</g>
</svg>
<svg class="abs" style="left:580px;top:890px" width="407" height="59" viewBox="580 890 407 59">
<defs>
<linearGradient id="pill" x1="0" y1="0" x2="0" y2="1"><stop offset="0" stop-color="#f9fafc"/><stop offset="1" stop-color="#eef1f5"/></linearGradient>
<linearGradient id="btn" x1="0" y1="0" x2="0" y2="1"><stop offset="0" stop-color="#fbfbfb"/><stop offset="0.45" stop-color="#e6e6e6"/><stop offset="0.55" stop-color="#c9c9c9"/><stop offset="1" stop-color="#ececec"/></linearGradient>
<radialGradient id="blue" cx="0.5" cy="0.75" r="0.75"><stop offset="0" stop-color="#5fa0ff"/><stop offset="0.45" stop-color="#1f4fe0"/><stop offset="0.8" stop-color="#0c28a8"/><stop offset="1" stop-color="#0a1f80"/></radialGradient>
<linearGradient id="gloss" x1="0" y1="0" x2="0" y2="1"><stop offset="0" stop-color="#d8def8" stop-opacity="0.9"/><stop offset="1" stop-color="#6a80e0" stop-opacity="0.2"/></linearGradient>
<linearGradient id="pic" x1="0" y1="0" x2="0" y2="1"><stop offset="0" stop-color="#b8e0f0"/><stop offset="0.5" stop-color="#80b0a0"/><stop offset="1" stop-color="#3a7050"/></linearGradient>
</defs>
<rect x="588.5" y="902.5" width="430" height="38" rx="19" fill="url(#pill)" stroke="#8e939a" stroke-width="1"/>
<g fill="none" stroke="#1f3590" stroke-width="2.6"><circle cx="635.2" cy="919.8" r="6.4"/></g>
<path d="M631 924.5L625.5 929.8" stroke="#1f3590" stroke-width="3.2" stroke-linecap="round"/>
<path d="M635.2 916V923.6M631.4 919.8H639" stroke="#2448b8" stroke-width="2.2"/>
<path d="M649.8 919.3H657L653.4 925Z" fill="#2448b8"/>
<path d="M696 913.6h5v2.5h-2.5v2.5h-2.5zM713.8 913.6h-5v2.5h2.5v2.5h2.5zM696 929.8h5v-2.5h-2.5v-2.5h-2.5zM713.8 929.8h-5v-2.5h2.5v-2.5h2.5z" fill="#1c2a80"/>
<rect x="700.5" y="917.5" width="9" height="8" fill="none" stroke="#2a55c8" stroke-width="2"/>
<rect x="740" y="906" width="180" height="31" rx="8" fill="url(#btn)" stroke="#555" stroke-width="1"/>
<path d="M762 912.5h3.2v16h-3.2zM766 920.5L778 912.5V928.5Z" fill="#1f4bc0"/>
<path d="M894 912.5h3.2v16h-3.2zM893 920.5L881 912.5V928.5Z" fill="#1f4bc0"/>
<circle cx="830" cy="921.5" r="30" fill="#f7f7f8" stroke="#8a8a8a" stroke-width="1"/>
<circle cx="830" cy="921.5" r="25.5" fill="url(#blue)" stroke="#0a1a70" stroke-width="1"/>
<ellipse cx="830" cy="910" rx="19" ry="11" fill="url(#gloss)"/>
<rect x="815.5" y="910.5" width="28" height="22" rx="2" fill="#f1f1f1" stroke="#b9b9b9" stroke-width="1"/>
<rect x="819" y="914" width="21" height="15" fill="url(#pic)"/>
<path d="M941.3 925.2A6.2 6.2 0 1 0 946 917" fill="none" stroke="#1c2a8c" stroke-width="2.8"/>
<path d="M939 914.5L946.5 910.5L946 920.5Z" fill="#1f55c8"/>
<path d="M986 917A6.2 6.2 0 1 0 988 928.5" fill="none" stroke="#1c2a8c" stroke-width="2.8"/>
</svg>
</body></html>
